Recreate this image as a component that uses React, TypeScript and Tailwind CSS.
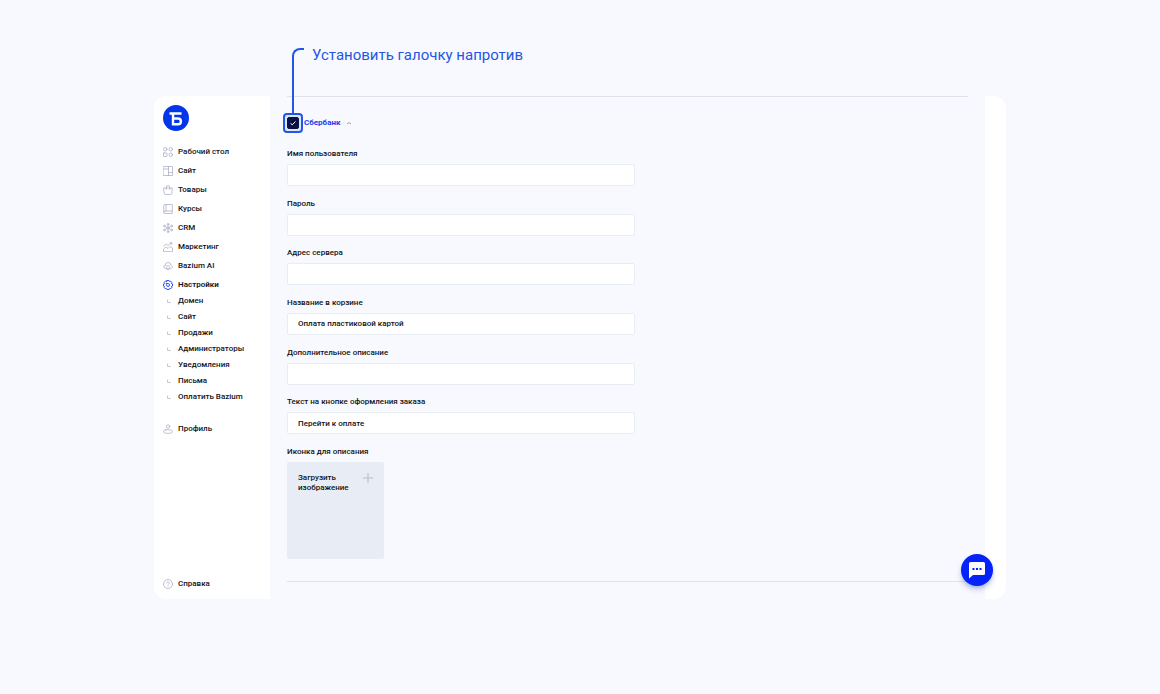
import React, { useState } from "react";

// =========================================================================
// --- 1. ICONS ------------------------------------------------------------
// =========================================================================

const Icon = ({ children, className = "text-[#a9aec4]" }) => (
  <svg
    viewBox="0 0 20 20"
    fill="none"
    stroke="currentColor"
    strokeWidth="1.5"
    strokeLinecap="round"
    strokeLinejoin="round"
    aria-hidden="true"
    className={`size-[10px] shrink-0 ${className}`}
  >
    {children}
  </svg>
);

const DashboardIcon = () => (
  <Icon>
    <circle cx="4.5" cy="4.5" r="3.5" />
    <circle cx="15.5" cy="4.5" r="3.5" />
    <rect x="1" y="12" width="7" height="7" rx="1" />
    <circle cx="15.5" cy="15.5" r="3.5" />
  </Icon>
);

const SiteIcon = () => (
  <Icon>
    <path d="M1 1h18v18H1zM11 1v18M1 6h10M11 13h8" />
  </Icon>
);

const BagIcon = () => (
  <Icon>
    <path d="M1.5 6h17l-1 11a2 2 0 0 1-2 2h-11a2 2 0 0 1-2-2z" />
    <path d="M6.5 9V4.5a3.5 3.5 0 0 1 7 0V9" />
  </Icon>
);

const CourseIcon = () => (
  <Icon>
    <path d="M1.5 16.500V3a2 2 0 0 1 2-2h15v18H4a2.500 2.500 0 0 1 0-5h14.500M6 1v13" />
  </Icon>
);

const CrmIcon = () => (
  <Icon>
    <circle cx="10" cy="10" r="2.2" />
    <circle cx="10" cy="2.5" r="1.7" />
    <circle cx="10" cy="17.5" r="1.7" />
    <circle cx="2.700" cy="6" r="1.7" />
    <circle cx="17.300" cy="6" r="1.7" />
    <circle cx="2.700" cy="14" r="1.7" />
    <circle cx="17.300" cy="14" r="1.7" />
    <path d="M10 4.2v3.6M10 12.2v3.6M4.5 7 8 9M15.5 7 12 9M4.5 13 8 11M15.5 13 12 11" />
  </Icon>
);

const MarketingIcon = () => (
  <Icon>
    <path d="M1 18.5V14l5-4 4 3 4-4 5 3v6.5z" />
    <path d="m1.500 8 5-4 3.500 3 7.500-5.500M14 1.500h3.500V5" />
  </Icon>
);

const AiIcon = () => (
  <Icon>
    <path d="M4 9a6 6 0 0 1 12 0c4 .5 4 5 0 5.500H4C0 14 0 9.500 4 9z" />
    <path d="M7 14.500V16c0 2 6 2 6 0v-1.500M7 10.500c0-2 2.500-2 3 0 .5-2 3-2 3 0" />
  </Icon>
);

const GearIcon = () => (
  <Icon className="text-[#1a3df0]">
    <path
      strokeWidth="1.800"
      d="M8 1h4l1 2.300 2.300-1 2.400 2.400-1 2.300L19 8v4l-2.300 1 1 2.300-2.400 2.400-2.300-1L12 19H8l-1-2.300-2.300 1-2.400-2.400 1-2.300L1 12V8l2.300-1-1-2.300 2.400-2.400 2.300 1z"
    />
    <path strokeWidth="1.800" d="M7 7h3.500a3 3 0 1 1-3.500 3z" />
  </Icon>
);

const ProfileIcon = () => (
  <Icon>
    <circle cx="10" cy="5" r="3.5" />
    <rect x="1.500" y="11.500" width="17" height="7" rx="3.500" />
  </Icon>
);

const HelpIcon = () => (
  <Icon>
    <circle cx="10" cy="10" r="9" />
    <path d="M7.500 8a2.500 2.500 0 1 1 3.700 2.200c-.8.4-1.200.8-1.200 1.600M10 14.500v.1" />
  </Icon>
);

const CornerIcon = () => (
  <svg
    viewBox="0 0 10 10"
    fill="none"
    stroke="currentColor"
    aria-hidden="true"
    className="size-[10px] shrink-0 text-[#c6c9d8]"
  >
    <path d="M4.500 3.500v3H8" />
  </svg>
);

const Logo = () => (
  <svg viewBox="0 0 26 26" aria-hidden="true" className="size-[26px]">
    <circle cx="13" cy="13" r="13" fill="#0336ea" />
    <path
      d="M6.500 8.500h12M10 8.500v10.800h5a2.900 2.900 0 0 0 0-5.800h-5"
      fill="none"
      stroke="#fff"
      strokeWidth="2.400"
    />
  </svg>
);

// =========================================================================
// --- 2. DATA -------------------------------------------------------------
// =========================================================================

const menu = [
  { label: "Рабочий стол", icon: DashboardIcon },
  { label: "Сайт", icon: SiteIcon },
  { label: "Товары", icon: BagIcon },
  { label: "Курсы", icon: CourseIcon },
  { label: "CRM", icon: CrmIcon },
  { label: "Маркетинг", icon: MarketingIcon },
  { label: "Bazium AI", icon: AiIcon },
  { label: "Настройки", icon: GearIcon, active: true },
];

const settingsMenu = [
  "Домен",
  "Сайт",
  "Продажи",
  "Администраторы",
  "Уведомления",
  "Письма",
  "Оплатить Bazium",
];

const fields = [
  { id: "username", label: "Имя пользователя", value: "" },
  { id: "password", label: "Пароль", value: "", type: "password" },
  { id: "server", label: "Адрес сервера", value: "" },
  { id: "title", label: "Название в корзине", value: "Оплата пластиковой картой" },
  { id: "description", label: "Дополнительное описание", value: "" },
  { id: "button", label: "Текст на кнопке оформления заказа", value: "Перейти к оплате" },
];

// =========================================================================
// --- 3. COMPONENTS -------------------------------------------------------
// =========================================================================

const MenuLink = ({ label, icon: ItemIcon, active = false }) => (
  <a
    href="#"
    className={`flex h-4 items-center gap-[5px] whitespace-nowrap ${
      active ? "font-semibold" : "font-medium"
    }`}
  >
    <ItemIcon />
    {label}
  </a>
);

const Sidebar = () => (
  <aside className="flex w-[116px] shrink-0 flex-col rounded-l-xl bg-white pt-[9px] pb-[7px] pl-[9px]">
    <a href="#" aria-label="Bazium" className="self-start">
      <Logo />
    </a>
    <nav className="mt-[13px] flex flex-1 flex-col">
      <ul className="flex flex-col gap-[3px]">
        {menu.map((item) => (
          <li key={item.label}>
            <MenuLink {...item} />
          </li>
        ))}
      </ul>
      <ul className="mb-4">
        {settingsMenu.map((label) => (
          <li key={label}>
            <MenuLink label={label} icon={CornerIcon} />
          </li>
        ))}
      </ul>
      <MenuLink label="Профиль" icon={ProfileIcon} />
      <div className="mt-auto">
        <MenuLink label="Справка" icon={HelpIcon} />
      </div>
    </nav>
  </aside>
);

const TextField = ({ id, label, value, type = "text" }) => (
  <div className="flex flex-col gap-1">
    <label htmlFor={id} className="font-medium">
      {label}
    </label>
    <input
      id={id}
      type={type}
      defaultValue={value}
      className="h-[22px] w-full max-w-[348px] rounded-xs border border-[#e8edf4] bg-white px-[10px] font-medium outline-none focus:border-blue-400"
    />
  </div>
);

const BankToggle = ({ checked, onChange }) => (
  <div className="flex h-5 items-center gap-[5px]">
    <span className="relative flex size-3">
      {/* callout line and highlight around the checkbox */}
      <span className="pointer-events-none absolute bottom-4 left-[5px] h-[65px] w-3 rounded-tl-lg border-t-2 border-l-2 border-[#2456e6]" />
      <span className="pointer-events-none absolute -inset-1 rounded-sm border-2 border-[#2456e6] bg-[#dbe6fb]" />
      <input
        id="sberbank"
        type="checkbox"
        checked={checked}
        onChange={onChange}
        className="peer relative size-3 appearance-none rounded-xs border border-[#0a1145] bg-white checked:bg-[#0a1145]"
      />
      <svg
        viewBox="0 0 12 12"
        fill="none"
        stroke="#fff"
        aria-hidden="true"
        className="pointer-events-none absolute inset-0 size-3 opacity-0 peer-checked:opacity-100"
      >
        <path d="m3.500 6.300 1.700 1.500L8.500 4.500" />
      </svg>
    </span>
    <label htmlFor="sberbank" className="font-bold text-[#1a3df0]">
      Сбербанк
    </label>
    <button type="button" aria-label="Свернуть">
      <svg
        viewBox="0 0 6 4"
        fill="none"
        stroke="#9aa3c4"
        aria-hidden="true"
        className="h-1 w-[6px]"
      >
        <path d="m1 3 2-1.500L5 3" />
      </svg>
    </button>
  </div>
);

const ImageUpload = () => (
  <div className="flex flex-col gap-1">
    <span className="font-medium">Иконка для описания</span>
    <button
      type="button"
      className="flex size-[97px] items-start justify-between rounded-xs bg-[#e8edf5] p-[11px] text-left font-medium leading-[10px]"
    >
      <span>
        Загрузить
        <br />
        изображение
      </span>
      <svg
        viewBox="0 0 10 10"
        stroke="#b5bac6"
        aria-hidden="true"
        className="size-[10px] shrink-0"
      >
        <path d="M5 0v10M0 5h10" />
      </svg>
    </button>
  </div>
);

const ChatButton = () => (
  <button
    type="button"
    aria-label="Открыть чат"
    className="absolute right-[13px] bottom-[13px] flex size-8 items-center justify-center rounded-full bg-[#0522fb] shadow-md shadow-blue-900/30"
  >
    <svg viewBox="0 0 18 18" aria-hidden="true" className="size-[18px]">
      <path
        d="M2.500 1h13A1.500 1.500 0 0 1 17 2.500v10a1.500 1.500 0 0 1-1.500 1.500H5l-4 3.500v-15A1.500 1.500 0 0 1 2.500 1z"
        fill="#fff"
      />
      <path d="M4.500 7h2v2h-2zM8 7h2v2H8zM11.500 7h2v2h-2z" fill="#0522fb" />
    </svg>
  </button>
);

// =========================================================================
// --- 4. PAGE -------------------------------------------------------------
// =========================================================================

export default function App() {
  const [checked, setChecked] = useState(true);

  return (
    <div className="min-h-screen bg-[#f8f9fe] px-4 pt-[45px] pb-24 font-['Roboto','Noto_Sans',sans-serif] text-[8px] leading-3 text-[#111318]">
      <div className="mx-auto w-full max-w-[852px]">
        <h1 className="mb-[31px] pl-[158px] text-[15px] leading-5 text-[#2456e6]">
          Установить галочку напротив
        </h1>
        <div className="relative flex min-h-[503px]">
          <Sidebar />
          <main className="flex flex-1 flex-col pr-[17px] pb-[17px] pl-[17px]">
            <form className="flex flex-1 flex-col border-y border-[#dfe2ea] pt-4 pb-[22px]">
              <BankToggle
                checked={checked}
                onChange={(e) => setChecked(e.target.checked)}
              />
              <div className="mt-[15px] flex flex-1 flex-col justify-between">
                {fields.map((field) => (
                  <TextField key={field.id} {...field} />
                ))}
                <ImageUpload />
              </div>
            </form>
          </main>
          <div className="w-[21px] shrink-0 rounded-r-xl bg-white" />
          <ChatButton />
        </div>
      </div>
    </div>
  );
}
